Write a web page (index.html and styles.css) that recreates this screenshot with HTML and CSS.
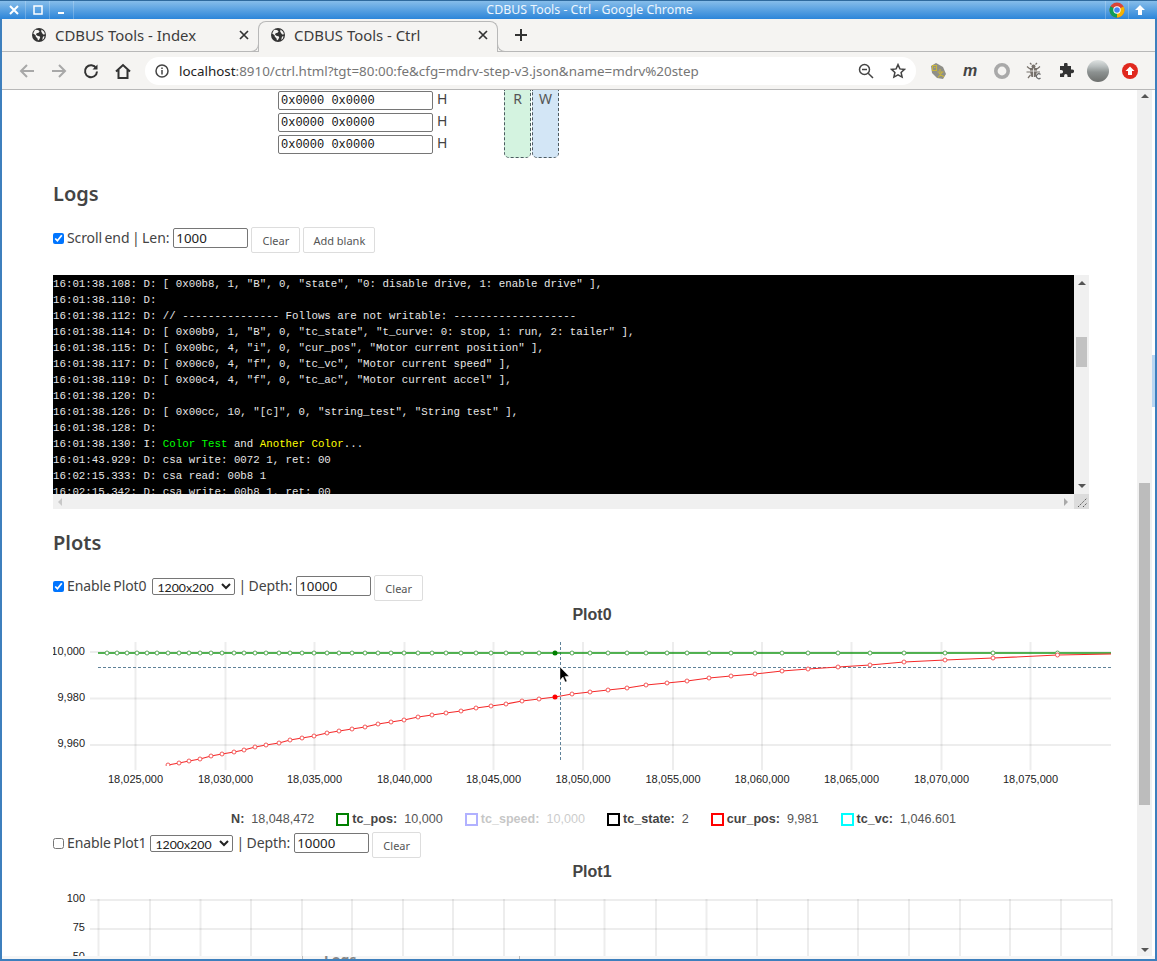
FILE: index.html
```html
<!DOCTYPE html>
<html lang="en">
<head>
<meta charset="utf-8">
<title>CDBUS Tools - Ctrl</title>
<link rel="stylesheet" href="styles.css">
</head>
<body>
<div class="window">
  <header class="titlebar">
    <div class="wm-btns">
      <span class="wm-btn"><svg width="12" height="12" viewBox="0 0 12 12"><path class="wm-x" d="M2 2l8 8M10 2l-8 8"/></svg></span>
      <span class="wm-btn"><svg width="12" height="12" viewBox="0 0 12 12"><rect class="wm-sq" x="2" y="2" width="8" height="8"/></svg></span>
      <span class="wm-btn"><svg width="12" height="12" viewBox="0 0 12 12"><rect class="wm-min" x="2" y="8" width="6" height="2"/></svg></span>
    </div>
    <div class="win-title">CDBUS Tools - Ctrl - Google Chrome</div>
    <div class="wm-right">
      <span class="wm-btn wm-wide">
        <svg width="16" height="16" viewBox="0 0 16 16"><circle cx="8" cy="8" r="7.5" fill="#db4437"/><path d="M8 8L1.5 4.2A7.5 7.5 0 0 0 8 15.5z" fill="#0f9d58"/><path d="M8 8L14.6 4.5A7.5 7.5 0 0 1 8 15.5z" fill="#f4b400"/><circle cx="8" cy="8" r="3.7" fill="#fff"/><circle cx="8" cy="8" r="2.8" fill="#4285f4"/></svg>
      </span>
      <span class="wm-btn wm-wide"><svg width="12" height="12" viewBox="0 0 12 12"><path fill="#fff" d="M6 1l5 5H8v5H4V6H1z"/></svg></span>
    </div>
  </header>

  <nav class="tabstrip">
    <div class="tab">
      <svg class="globe" width="14" height="14" viewBox="0 0 14 14"><circle cx="7" cy="7" r="7" fill="#333"/><path fill="#f5f4f2" d="M3 1.8l3 .2 1.6 1.2-1 1.6-2 .4-.6 1.6 1.8 1.2 1.8.2.6 1.4-1 2-1.2.8-.6-2.2-1.6-1.4-.2-1.6L1.2 5.6zM9.5 1.6l2.6 2.2.9 2.4-1.8.2-1-1.2-1-1.8zM11 8.4l1.6-.2-.8 2.6-1.6 1.2z"/></svg>
      <span class="tab-label">CDBUS Tools - Index</span>
      <svg class="tab-x" width="10" height="10" viewBox="0 0 10 10"><path d="M1 1l8 8M9 1l-8 8"/></svg>
    </div>
    <div class="tab tab-active">
      <svg class="globe" width="14" height="14" viewBox="0 0 14 14"><circle cx="7" cy="7" r="7" fill="#333"/><path fill="#f5f4f2" d="M3 1.8l3 .2 1.6 1.2-1 1.6-2 .4-.6 1.6 1.8 1.2 1.8.2.6 1.4-1 2-1.2.8-.6-2.2-1.6-1.4-.2-1.6L1.2 5.6zM9.5 1.6l2.6 2.2.9 2.4-1.8.2-1-1.2-1-1.8zM11 8.4l1.6-.2-.8 2.6-1.6 1.2z"/></svg>
      <span class="tab-label">CDBUS Tools - Ctrl</span>
      <svg class="tab-x" width="10" height="10" viewBox="0 0 10 10"><path d="M1 1l8 8M9 1l-8 8"/></svg>
    </div>
    <svg class="new-tab" width="14" height="14" viewBox="0 0 14 14"><path d="M7 1v12M1 7h12"/></svg>
  </nav>

  <div class="toolbar">
    <span class="tool"><svg width="18" height="18" viewBox="0 0 18 18"><path class="ic-off" d="M16 9H3M9 3L3 9l6 6"/></svg></span>
    <span class="tool"><svg width="18" height="18" viewBox="0 0 18 18"><path class="ic-off" d="M2 9h13M9 3l6 6-6 6"/></svg></span>
    <span class="tool"><svg width="18" height="18" viewBox="0 0 18 18"><path class="ic-on" d="M14.2 6.2A6 6 0 1 0 15 9.5"/><path fill="#333" d="M15.5 2.5v5h-5z"/></svg></span>
    <span class="tool"><svg width="18" height="18" viewBox="0 0 18 18"><path class="ic-on" d="M2 9.5L9 3l7 6.5M4.5 8v8h9V8"/></svg></span>
    <div class="omnibox">
      <svg class="omni-info" width="14" height="14" viewBox="0 0 14 14"><circle class="ic-thin" cx="7" cy="7" r="6"/><path class="ic-thin" d="M7 6v4.5M7 3.4v1.5"/></svg>
      <span class="url"><span class="url-host">localhost</span>:8910/ctrl.html?tgt=80:00:fe&amp;cfg=mdrv-step-v3.json&amp;name=mdrv%20step</span>
      <svg class="omni-zoom" width="16" height="16" viewBox="0 0 16 16"><circle class="ic-thin" cx="6.5" cy="6.5" r="5"/><path class="ic-thin" d="M4 6.5h5M10.2 10.2L15 15"/></svg>
      <svg class="omni-star" width="16" height="16" viewBox="0 0 16 16"><path class="ic-thin" d="M8 1.6l1.9 4.3 4.6.5-3.4 3.1 1 4.6L8 11.8l-4.1 2.3 1-4.6L1.500 6.400l4.600-.5z"/></svg>
    </div>
    <div class="extensions">
      <span class="tool"><svg width="18" height="18" viewBox="0 0 18 18"><path fill="#8f8f88" d="M2 4l5-3 7 4 3 7-3 5-6-1-5-5z"/><path fill="none" stroke="#c9b53c" stroke-width="1.100" d="M3.500 3.500h4v5h-4zM5 5.500h1.500M11 7v2M8.500 10h6M13 10.500l-4 5M10 11l5 4"/></svg></span>
      <span class="tool ext-m">m</span>
      <span class="tool"><svg width="18" height="18" viewBox="0 0 18 18"><circle cx="9" cy="9" r="6.200" fill="none" stroke="#a9a9a9" stroke-width="3.600"/></svg></span>
      <span class="tool"><svg width="18" height="18" viewBox="0 0 18 18"><path fill="#77716b" d="M5 6h7v4l-1.500 5h-4L5 10z"/><path stroke="#f5f4f2" stroke-width=".8" d="M8.500 6v9M5 9h7"/><circle cx="8.500" cy="4.500" r="2" fill="#77716b"/><path class="bug" d="M6.500 2.500L5 1M10.500 2.500L12 1M5 7L2 4.500M12 7l3-2.500M5 10H1.500M12 10h3M5.500 13L3 16"/><path class="bug-c" d="M15.500 12.500a2.400 2.400 0 1 0 0 3.500"/></svg></span>
      <span class="tool"><svg width="16" height="16" viewBox="0 0 16 16"><path fill="#333" d="M6 1.500a1.800 1.800 0 0 1 3.600 0V3H13v3.400h1.200a1.900 1.900 0 0 1 0 3.800H13V14H9.500v-1.300a1.700 1.700 0 0 0-3.400 0V14H2V10.500h1.300a1.800 1.800 0 0 0 0-3.600H2V3h4z"/></svg></span>
      <span class="tool"><span class="avatar"></span></span>
      <span class="tool"><svg width="16" height="16" viewBox="0 0 16 16"><circle cx="8" cy="8" r="8" fill="#e0281e"/><path fill="#fff" d="M8 3.500L12.500 8H10v4H6V8H3.500z"/></svg></span>
    </div>
  </div>

  <div class="viewport">
    <main class="page">
      <section class="regs">
        <div class="reg-rows">
          <div class="reg-row"><input class="reg-input" value="0x0000 0x0000"><span>H</span></div>
          <div class="reg-row"><input class="reg-input" value="0x0000 0x0000"><span>H</span></div>
          <div class="reg-row"><input class="reg-input" value="0x0000 0x0000"><span>H</span></div>
        </div>
        <div class="rw-box rw-read">R</div>
        <div class="rw-box rw-write">W</div>
      </section>

      <h2 class="section-title first-title">Logs</h2>
      <div class="ctl-row">
        <input class="ctl-check" type="checkbox" checked>
        <span>Scroll end | Len:</span>
        <input class="num-input len-input" value="1000">
        <button class="btn">Clear</button>
        <button class="btn btn-wide">Add blank</button>
      </div>

      <div class="logbox">
        <div class="log-main">
          <pre class="log-text">16:01:38.108: D: [ 0x00b8, 1, "B", 0, "state", "0: disable drive, 1: enable drive" ],
16:01:38.110: D:
16:01:38.112: D: // --------------- Follows are not writable: -------------------
16:01:38.114: D: [ 0x00b9, 1, "B", 0, "tc_state", "t_curve: 0: stop, 1: run, 2: tailer" ],
16:01:38.115: D: [ 0x00bc, 4, "i", 0, "cur_pos", "Motor current position" ],
16:01:38.117: D: [ 0x00c0, 4, "f", 0, "tc_vc", "Motor current speed" ],
16:01:38.119: D: [ 0x00c4, 4, "f", 0, "tc_ac", "Motor current accel" ],
16:01:38.120: D:
16:01:38.126: D: [ 0x00cc, 10, "[c]", 0, "string_test", "String test" ],
16:01:38.128: D:
16:01:38.130: I: <span class="c-green">Color Test</span> and <span class="c-yellow">Another Color</span>...
16:01:43.929: D: csa write: 0072 1, ret: 00
16:02:15.333: D: csa read: 00b8 1
16:02:15.342: D: csa write: 00b8 1, ret: 00</pre>
          <div class="log-vbar">
            <span class="arrow-up"></span>
            <span class="log-vthumb"></span>
            <span class="arrow-down"></span>
          </div>
        </div>
        <div class="log-hbar">
          <span class="arrow-left"></span>
          <span class="arrow-right"></span>
          <span class="log-corner"><svg width="15" height="15" viewBox="0 0 15 15"><path class="grip" d="M4 13l9-9M9 13l4-4"/></svg></span>
        </div>
      </div>

      <h2 class="section-title plots-title">Plots</h2>
      <div class="ctl-row">
        <input class="ctl-check" type="checkbox" checked>
        <span class="label-wide">Enable Plot0</span>
        <select class="size-select"><option>1200x200</option></select>
        <span>| Depth:</span>
        <input class="num-input depth-input" value="10000">
        <button class="btn">Clear</button>
      </div>

      <div class="plot-title">Plot0</div>
      <svg class="chart chart0" width="1078" height="174" viewBox="53 627 1078 174">
        <defs><clipPath id="plotclip"><rect x="98" y="641" width="1014" height="125"/></clipPath></defs>
        <g class="grid">
          <path d="M90 652H1111M90 698.500H1111M90 745H1111"/>
          <path d="M135.500 642V770M225.500 642V770M314.500 642V770M404.500 642V770M493.500 642V770M583 642V770M673 642V770M762 642V770M851.500 642V770M941.500 642V770M1030.500 642V770"/>
        </g>
        <path class="cross" d="M98 667.500H1111M560.500 642V762"/>
        <g class="ylab">
          <text x="85" y="655">10,000</text>
          <text x="85" y="701">9,980</text>
          <text x="85" y="747">9,960</text>
        </g>
        <g class="xlab">
          <text x="135.500" y="783">18,025,000</text>
          <text x="225.500" y="783">18,030,000</text>
          <text x="314.500" y="783">18,035,000</text>
          <text x="404.500" y="783">18,040,000</text>
          <text x="493.500" y="783">18,045,000</text>
          <text x="583" y="783">18,050,000</text>
          <text x="673" y="783">18,055,000</text>
          <text x="762" y="783">18,060,000</text>
          <text x="851.500" y="783">18,065,000</text>
          <text x="941.500" y="783">18,070,000</text>
          <text x="1030.500" y="783">18,075,000</text>
        </g>
        <path class="line-green" d="M98 653H1111"/>
        <g class="pts-green">
          <circle cx="107" cy="653" r="2"/><circle cx="117" cy="653" r="2"/><circle cx="127" cy="653" r="2"/><circle cx="137" cy="653" r="2"/><circle cx="147" cy="653" r="2"/><circle cx="157" cy="653" r="2"/><circle cx="168" cy="653" r="2"/><circle cx="179" cy="653" r="2"/><circle cx="189" cy="653" r="2"/><circle cx="200" cy="653" r="2"/><circle cx="211" cy="653" r="2"/><circle cx="222" cy="653" r="2"/><circle cx="234" cy="653" r="2"/><circle cx="244" cy="653" r="2"/><circle cx="255" cy="653" r="2"/><circle cx="266" cy="653" r="2"/><circle cx="279" cy="653" r="2"/><circle cx="290" cy="653" r="2"/><circle cx="302" cy="653" r="2"/><circle cx="314" cy="653" r="2"/><circle cx="327" cy="653" r="2"/><circle cx="339" cy="653" r="2"/><circle cx="352" cy="653" r="2"/><circle cx="365" cy="653" r="2"/><circle cx="378" cy="653" r="2"/><circle cx="391" cy="653" r="2"/><circle cx="404" cy="653" r="2"/><circle cx="418" cy="653" r="2"/><circle cx="432" cy="653" r="2"/><circle cx="446" cy="653" r="2"/><circle cx="461" cy="653" r="2"/><circle cx="476" cy="653" r="2"/><circle cx="491" cy="653" r="2"/><circle cx="506" cy="653" r="2"/><circle cx="522" cy="653" r="2"/><circle cx="539" cy="653" r="2"/><circle cx="572" cy="653" r="2"/><circle cx="590" cy="653" r="2"/><circle cx="608" cy="653" r="2"/><circle cx="627" cy="653" r="2"/><circle cx="646" cy="653" r="2"/><circle cx="667" cy="653" r="2"/><circle cx="687" cy="653" r="2"/><circle cx="709" cy="653" r="2"/><circle cx="731" cy="653" r="2"/><circle cx="755" cy="653" r="2"/><circle cx="782" cy="653" r="2"/><circle cx="808" cy="653" r="2"/><circle cx="838" cy="653" r="2"/><circle cx="870" cy="653" r="2"/><circle cx="904" cy="653" r="2"/><circle cx="945" cy="653" r="2"/><circle cx="993" cy="653" r="2"/><circle cx="1057.500" cy="653" r="2"/>
        </g>
        <g clip-path="url(#plotclip)">
          <g transform="translate(0 1)">
          <polyline class="line-red" points="168,764 179,762 189,760 200,758 211,755 222,753 234,751 244,749 255,746 266,744 279,742 290,739 302,737 314,735 327,732 339,730 352,728 365,726 378,723 391,721 404,719 418,716 432,714 446,712 461,710 476,707 491,705 506,703 522,700 539,698 555,696 572,693 590,691 608,689 627,687 646,684 667,682 687,680 709,677 731,675 755,673 782,670 808,668 838,666 870,664 904,661 945,659 993,657 1057.500,654 1111,653"/>
          <g class="pts-red">
            <circle cx="168" cy="764" r="2"/><circle cx="179" cy="762" r="2"/><circle cx="189" cy="760" r="2"/><circle cx="200" cy="758" r="2"/><circle cx="211" cy="755" r="2"/><circle cx="222" cy="753" r="2"/><circle cx="234" cy="751" r="2"/><circle cx="244" cy="749" r="2"/><circle cx="255" cy="746" r="2"/><circle cx="266" cy="744" r="2"/><circle cx="279" cy="742" r="2"/><circle cx="290" cy="739" r="2"/><circle cx="302" cy="737" r="2"/><circle cx="314" cy="735" r="2"/><circle cx="327" cy="732" r="2"/><circle cx="339" cy="730" r="2"/><circle cx="352" cy="728" r="2"/><circle cx="365" cy="726" r="2"/><circle cx="378" cy="723" r="2"/><circle cx="391" cy="721" r="2"/><circle cx="404" cy="719" r="2"/><circle cx="418" cy="716" r="2"/><circle cx="432" cy="714" r="2"/><circle cx="446" cy="712" r="2"/><circle cx="461" cy="710" r="2"/><circle cx="476" cy="707" r="2"/><circle cx="491" cy="705" r="2"/><circle cx="506" cy="703" r="2"/><circle cx="522" cy="700" r="2"/><circle cx="539" cy="698" r="2"/><circle cx="572" cy="693" r="2"/><circle cx="590" cy="691" r="2"/><circle cx="608" cy="689" r="2"/><circle cx="627" cy="687" r="2"/><circle cx="646" cy="684" r="2"/><circle cx="667" cy="682" r="2"/><circle cx="687" cy="680" r="2"/><circle cx="709" cy="677" r="2"/><circle cx="731" cy="675" r="2"/><circle cx="755" cy="673" r="2"/><circle cx="782" cy="670" r="2"/><circle cx="808" cy="668" r="2"/><circle cx="838" cy="666" r="2"/><circle cx="870" cy="664" r="2"/><circle cx="904" cy="661" r="2"/><circle cx="945" cy="659" r="2"/><circle cx="993" cy="657" r="2"/><circle cx="1057.500" cy="654" r="2"/>
          </g>
          </g>
        </g>
        <circle class="focus-green" cx="555" cy="653" r="2.500"/>
        <circle class="focus-red" cx="555" cy="697" r="2.500"/>
        <path class="cursor" d="M560 667v13l3-3 2.200 5 1.800-.8-2.200-4.800 4.200-.2z"/>
      </svg>

      <div class="legend">
        <span class="lg-item"><b>N:</b><span class="lg-val">18,048,472</span></span>
        <span class="lg-item"><i class="mark m-green"></i><b>tc_pos:</b><span class="lg-val">10,000</span></span>
        <span class="lg-item lg-off"><i class="mark m-blue"></i><b>tc_speed:</b><span class="lg-val">10,000</span></span>
        <span class="lg-item"><i class="mark m-black"></i><b>tc_state:</b><span class="lg-val">2</span></span>
        <span class="lg-item"><i class="mark m-red"></i><b>cur_pos:</b><span class="lg-val">9,981</span></span>
        <span class="lg-item"><i class="mark m-cyan"></i><b>tc_vc:</b><span class="lg-val">1,046.601</span></span>
      </div>

      <div class="ctl-row row-plot1">
        <input class="ctl-check" type="checkbox">
        <span>Enable Plot1</span>
        <select class="size-select"><option>1200x200</option></select>
        <span>| Depth:</span>
        <input class="num-input depth-input" value="10000">
        <button class="btn">Clear</button>
      </div>
      <div class="plot-title title-plot1">Plot1</div>
      <svg class="chart" width="1078" height="90" viewBox="53 885 1078 90">
        <g class="grid">
          <path d="M90 900H1112M90 929H1112M90 958H1112"/>
          <path d="M98.500 899V974M150 899V974M200.500 899V974M251 899V974M302 899V974M352 899V974M403 899V974M453 899V974M504 899V974M555 899V974M604.500 899V974M656 899V974M706.500 899V974M757 899V974M808 899V974M858 899V974M909 899V974M960 899V974M1010 899V974M1061 899V974M1112 899V974"/>
        </g>
        <g class="ylab">
          <text x="85" y="902">100</text>
          <text x="85" y="931">75</text>
          <text x="85" y="960">50</text>
        </g>
      </svg>
    </main>
    <aside class="page-scroll">
      <span class="arrow-up"></span>
      <span class="page-thumb"></span>
      <span class="arrow-down"></span>
    </aside>
    <div class="edge"><span class="edge-mark"></span></div>
  </div>
  <footer class="under-strip"><span class="under-panel"><span class="under-text">Logs</span></span></footer>
</div>
</body>
</html>
```

FILE: styles.css
```css
* { box-sizing: border-box; }
html, body { margin: 0; height: 100%; overflow: hidden; }
body { font-family: "Noto Sans", sans-serif; color: #444; background: #fff; }

.window {
  width: 1157px; height: 961px;
  display: flex; flex-direction: column;
  padding: 0 2px 2px;
  background: #3d7fbd;
}

/* window manager title */
.titlebar {
  flex: none; height: 19px; margin: 0 -2px;
  display: flex; align-items: center;
  background: linear-gradient(#86bdea, #2c85d9);
  border-top: 1px solid #2f6a9e;
}
.wm-btns { display: flex; padding-left: 2px; flex: none; }
.wm-btn {
  width: 24px; height: 18px;
  display: flex; align-items: center; justify-content: center;
  border-right: 1px solid rgba(255,255,255,.22);
}
.wm-x { stroke: #fff; stroke-width: 2; fill: none; }
.wm-sq { stroke: #fff; stroke-width: 1.500; fill: none; }
.wm-min { fill: #fff; }
.win-title {
  flex: 1; text-align: center; color: #eef6fd;
  font-size: 12.350px; line-height: 18px;
}
.wm-right { display: flex; flex: none; padding-right: 6px; }
.wm-wide { width: 23px; border-right: 0; border-left: 1px solid rgba(255,255,255,.22); }

/* tabs */
.tabstrip {
  flex: none; height: 33px;
  display: flex; align-items: flex-end;
  padding-left: 16px;
  background: #f5f4f2;
  border-bottom: 1px solid #b8b8b8;
}
.tab {
  width: 240px; height: 31px; margin-bottom: -1px; flex: none;
  position: relative;
  display: flex; align-items: center;
  padding: 0 9px 3px 14px;
  font-size: 14.900px; color: #3c3c3c;
}
.tab-active {
  background: #f5f4f2;
  border: 1px solid #b8b8b8; border-bottom: 0;
  border-radius: 8px 8px 0 0;
  padding-left: 12px; padding-bottom: 4px;
}
.tab-active::before, .tab-active::after {
  content: ""; position: absolute; bottom: 0; width: 8px; height: 8px;
  border-bottom: 1px solid #b8b8b8;
}
.tab-active::before { left: -9px; border-right: 1px solid #b8b8b8; border-radius: 0 0 8px 0; }
.tab-active::after { right: -9px; border-left: 1px solid #b8b8b8; border-radius: 0 0 0 8px; }
.globe { flex: none; margin-right: 9px; }
.tab-label { flex: 1; white-space: nowrap; }
.tab-x path { stroke: #333; stroke-width: 1.700; fill: none; }
.new-tab { margin: 0 0 9px 16px; }
.new-tab path { stroke: #333; stroke-width: 2; fill: none; }

/* toolbar */
.toolbar {
  flex: none; height: 38px;
  display: flex; align-items: center;
  padding: 0 9px;
  background: #f5f4f2;
  border-bottom: 1px solid #b8b8b8;
}
.tool { width: 32px; height: 28px; flex: none; display: flex; align-items: center; justify-content: center; }
.ic-off { fill: none; stroke: #a8a8a8; stroke-width: 2; }
.ic-on { fill: none; stroke: #333; stroke-width: 2; }
.ic-thin { fill: none; stroke: #444; stroke-width: 1.500; }
.omnibox {
  flex: 1; height: 28px; margin: 0 6px;
  display: flex; align-items: center;
  padding: 0 10px;
  background: #fff; border-radius: 14px;
}
.omni-info { flex: none; margin-right: 10px; }
.url { flex: 1; font-size: 13.400px; color: #767676; white-space: nowrap; }
.url-host { color: #222; }
.omni-zoom { flex: none; margin-right: 16px; }
.omni-star { flex: none; }
.extensions { display: flex; flex: none; }
.ext-m { font: italic bold 16px "Liberation Sans", sans-serif; color: #444; }
.bug { stroke: #77716b; stroke-width: 1.200; fill: none; }
.bug-c { stroke: #666; stroke-width: 1.200; fill: #f5f4f2; }
.avatar {
  width: 22px; height: 22px; border-radius: 50%;
  background: linear-gradient(#dfe3e2 0%, #b6bcbc 30%, #8d9291 55%, #6d6f6d 100%);
}

/* page */
.viewport { flex: 1; min-height: 0; display: flex; background: #fff; }
.page { flex: 1; min-width: 0; overflow: hidden; padding-left: 51px; font-size: 14px; }
.page-scroll {
  flex: none; width: 15px; position: relative;
  background: #f0f0f0;
  display: flex; flex-direction: column; align-items: center;
  padding: 4px 0;
}
.page-thumb {
  position: absolute; left: 2px; top: 393px;
  width: 11px; height: 322px; background: #bcbcbc;
}
.page-scroll .arrow-down { margin-top: auto; }
.edge { flex: none; width: 3px; position: relative; background: #fff; }
.edge-mark { position: absolute; top: 265px; left: 0; width: 3px; height: 52px; background: #b9d6f2; }
.arrow-up, .arrow-down { width: 0; height: 0; border-left: 4px solid transparent; border-right: 4px solid transparent; flex: none; }
.arrow-up { border-bottom: 4px solid #555; }
.arrow-down { border-top: 4px solid #555; }
.arrow-left, .arrow-right { width: 0; height: 0; border-top: 4px solid transparent; border-bottom: 4px solid transparent; flex: none; }
.arrow-left { border-right: 4px solid #c8c8c8; }
.arrow-right { border-left: 4px solid #a9a9a9; }

.regs { height: 68px; display: flex; padding-left: 225px; }
.reg-rows { width: 226px; padding-top: 1px; display: flex; flex-direction: column; gap: 3px; }
.reg-row { display: flex; align-items: flex-start; gap: 4px; height: 19px; line-height: 15px; }
.reg-input {
  width: 155px; height: 19px; padding: 0 2px;
  font: 12px "Liberation Mono", monospace; color: #111;
  border: 1px solid #767676; border-radius: 2px; background: #fff;
}
.rw-box {
  width: 27px; height: 68px; margin-right: 1px;
  border: 1px dashed #4c5a60; border-top: 0;
  border-radius: 0 0 5px 5px;
  text-align: center; line-height: 17px;
  color: #555;
}
.rw-read { background: #d4f3e0; }
.rw-write { background: #d3e6f6; }

.section-title { margin: 19px 0 0; font-size: 20px; line-height: 28px; font-weight: 600; color: #444; }
.first-title { margin-top: 22px; }
.plots-title { margin-top: 20px; margin-bottom: -1px; }
.ctl-row {
  margin-top: 19px; height: 26px;
  display: flex; align-items: flex-start;
  white-space: nowrap; word-spacing: -1px; letter-spacing: -.1px;
}
.ctl-row > span { line-height: 22px; }
.ctl-row > .label-wide { margin-right: 2px; }
.ctl-check { margin: 6px 3px 0 0; width: 11px; height: 11px; flex: none; }
.num-input {
  height: 20px; margin: 1px 3px 0 4px; padding: 0 2px;
  font: 13.300px "Noto Sans", sans-serif; color: #222; letter-spacing: 0;
  border: 1px solid #767676; border-radius: 2px; background: #fff;
}
.len-input { width: 75px; }
.depth-input { width: 75px; }
.btn {
  width: 49px; height: 26px; padding: 0;
  font: 11px "Noto Sans", sans-serif; color: #555; word-spacing: 0; letter-spacing: 0;
  background: #fff; border: 1px solid #ddd; border-radius: 2px;
}
.btn-wide { width: 72px; margin-left: 3px; }
.size-select {
  width: 83px; height: 17px; margin: 3px 0 0 4px; padding: 0;
  font: 12.300px "Lato", sans-serif; color: #222; letter-spacing: 0;
  background: #fff; border: 1px solid #767676; border-radius: 2px;
}
.size-select + span { margin-left: 3px; }

/* logs */
.logbox { margin-top: 22px; width: 1036px; height: 234px; background: #f0f0f0; }
.log-main { height: 219px; display: flex; }
.log-text {
  flex: 1; margin: 0; height: 219px; overflow: hidden; padding-top: 1px;
  background: #000; color: #e6e6e6;
  font: 10.770px/16px "Liberation Mono", monospace;
}
.c-green { color: #0f0; }
.c-yellow { color: #ff0; }
.log-vbar {
  flex: none; width: 15px; position: relative;
  display: flex; flex-direction: column; align-items: center;
  padding: 6px 0;
}
.log-vbar .arrow-down { margin-top: auto; }
.log-vthumb { position: absolute; top: 62px; left: 2px; width: 11px; height: 30px; background: #c2c2c2; }
.log-hbar { height: 15px; display: flex; align-items: center; padding-left: 5px; }
.log-hbar .arrow-right { margin-left: auto; margin-right: 6px; }
.log-corner { width: 15px; height: 15px; background: #dcdcdc; flex: none; display: flex; }
.grip { stroke: #555; stroke-width: 1; stroke-dasharray: 1.500 1; fill: none; }

/* plots */
.plot-title {
  height: 25px; margin-top: 1px; width: 1078px; text-align: center;
  font: bold 16px/25px "Liberation Sans", sans-serif; color: #444;
}
.chart { display: block; }
.grid path { stroke: #000; stroke-opacity: .07; stroke-width: 2; fill: none; }
.cross { stroke: #5f8299; stroke-width: 1; stroke-dasharray: 3 2; fill: none; }
.ylab text, .xlab text { font: 11px "Liberation Sans", sans-serif; fill: #222; }
.ylab text { text-anchor: end; }
.xlab text { text-anchor: middle; }
.line-green { stroke: #1a9a1a; stroke-width: 1.500; fill: none; }
.pts-green circle { fill: #fff; stroke: #5aa95a; stroke-width: 1; }
.line-red { stroke: #f52a2a; stroke-width: 1.100; fill: none; }
.pts-red circle { fill: #fff; stroke: #f45a5a; stroke-width: 1; }
.focus-green { fill: #008000; }
.focus-red { fill: #f00; }
.cursor { fill: #000; stroke: #fff; stroke-width: .4; }

.legend {
  width: 1081px; height: 16px; margin-top: 10px;
  display: flex; justify-content: center; gap: 22px;
  font: 12.600px/16px "Liberation Sans", sans-serif; color: #555;
}
.lg-item { display: flex; align-items: center; }
.lg-item b { color: #444; }
.lg-val { margin-left: 7px; }
.lg-off { opacity: .3; }
.mark { width: 13px; height: 13px; margin-right: 3px; border: 2px solid; background: #fff; }
.m-green { border-color: #008000; }
.m-blue { border-color: #0000ff; }
.m-black { border-color: #000; }
.m-red { border-color: #f00; }
.m-cyan { border-color: #0ff; }

.row-plot1 { margin-top: 5px; }
.title-plot1 { margin-top: 1px; height: 26px; line-height: 26px; }

.under-strip { flex: none; height: 3px; overflow: hidden; background: #f6f6f6; padding-left: 300px; }
.under-panel {
  display: block; width: 218px; height: 3px; padding-left: 21px;
  border-left: 1px solid #bbb; border-right: 1px solid #bbb;
  font: bold 14px/8px "Noto Sans", sans-serif; color: #888;
}
```
